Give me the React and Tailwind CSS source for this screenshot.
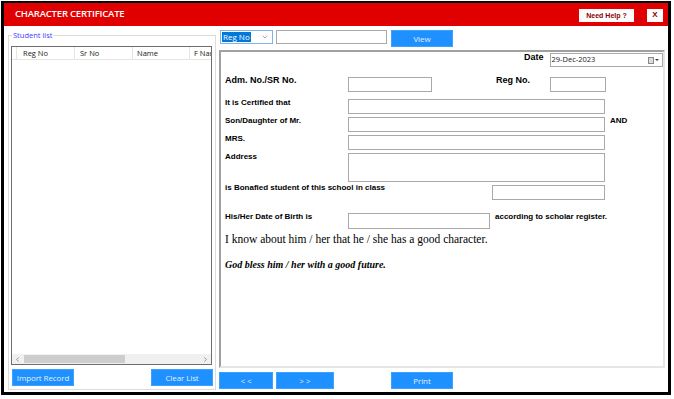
import { ChevronDown, ChevronLeft, ChevronRight } from "lucide-react";

const seg = { fontFamily: '"Open Sans", "Noto Sans", sans-serif' };
const serif = { fontFamily: '"Liberation Serif", "DejaVu Serif", serif' };

const Field = ({ w, h = "h-[15px]" }) => (
  <div className={`${w} ${h} border border-[#a9a9a9] bg-white`} />
);

const BlueBtn = ({ label, w }) => (
  <button
    className={`${w} h-[17px] bg-[#1e90ff] border border-[#3ea0ff] text-[#e3eefc] text-[8px] tracking-[-0.1px] leading-none whitespace-nowrap flex items-center justify-center`}
    style={seg}
  >
    {label}
  </button>
);

export default function App() {
  return (
    <div
      className="w-[674px] h-[399px] bg-white pl-px pt-px"
      style={{ fontFamily: '"Liberation Sans", Arial, sans-serif' }}
    >
      <div className="w-[670px] h-[394px] border-[3px] border-t-2 border-black flex flex-col bg-white">
        {/* title bar */}
        <div className="h-[23px] bg-[#e00000] flex items-center pl-[11px] pr-[5px]">
          <span className="text-white text-[9.5px] font-semibold tracking-[-0.2px]" style={seg}>
            CHARACTER CERTIFICATE
          </span>
          <div className="ml-auto flex items-center gap-[13px] mt-[1px]">
            <button className="w-[55px] h-[13px] bg-white text-[#8b0000] text-[7px] font-bold leading-none flex items-center justify-center">
              Need Help ?
            </button>
            <button className="w-[16px] h-[13px] bg-white text-[#8b0000] text-[8px] font-bold leading-none flex items-center justify-center">
              X
            </button>
          </div>
        </div>

        <div className="flex flex-1">
          {/* student list */}
          <fieldset className="ml-[4px] mt-[4px] mb-[2px] w-[208px] border border-[#dcdcdc] px-[2px] flex flex-col">
            <legend
              className="ml-[1px] px-[1px] text-[7.5px] leading-[10px] text-[#3c3cff]"
              style={seg}
            >
              Student list
            </legend>
            <div className="mt-[6px] w-[201px] h-[319px] border border-[#6e6e6e] flex flex-col bg-white overflow-hidden">
              <div
                className="h-[13px] flex text-[7.5px] leading-[12px] text-[#222] border-b border-[#e5e5e5] whitespace-nowrap"
                style={seg}
              >
                <div className="w-[5px] shrink-0 border-r border-[#e5e5e5]" />
                <div className="w-[58px] shrink-0 pl-[6px] border-r border-[#e5e5e5]">Reg No</div>
                <div className="w-[58px] shrink-0 pl-[5px] border-r border-[#e5e5e5]">Sr No</div>
                <div className="w-[57px] shrink-0 pl-[4px] border-r border-[#e5e5e5]">Name</div>
                <div className="pl-[4px] overflow-hidden">F Name</div>
              </div>
              <div className="flex-1" />
              <div className="h-[10px] bg-[#f0f0f0] flex items-center text-[#555]">
                <ChevronLeft size={7} strokeWidth={2} className="ml-[2px]" />
                <div className="ml-[3px] w-[101px] h-[8px] bg-[#cdcdcd]" />
                <ChevronRight size={7} strokeWidth={2} className="ml-auto mr-[2px]" />
              </div>
            </div>
            <div className="mt-[4px] flex justify-between pl-[1px]">
              <BlueBtn label="Import Record" w="w-[62px]" />
              <BlueBtn label="Clear List" w="w-[62px]" />
            </div>
          </fieldset>

          {/* right side */}
          <div className="ml-[3px] flex flex-col">
            <div className="mt-[4px] flex items-start">
              <div className="ml-[1px] w-[53px] h-[14px] border border-[#7eb4ea] bg-white flex items-center pl-[1px]">
                <span
                  className="bg-[#0078d7] text-white text-[8px] leading-[10px] px-[1px]"
                  style={seg}
                >
                  Reg No
                </span>
                <ChevronDown size={8} strokeWidth={1.5} className="ml-auto mr-[3px] text-[#555]" />
              </div>
              <div className="ml-[3px] w-[111px] h-[14px] border border-[#a9a9a9] bg-white" />
              <div className="ml-[4px]">
                <BlueBtn label="View" w="w-[62px]" />
              </div>
            </div>

            {/* certificate panel */}
            <div className="mt-[3px] w-[446px] h-[318px] border-2 border-t-[#a0a0a0] border-l-[#a0a0a0] border-r-[#e6e6e6] border-b-[#e6e6e6] flex flex-col pl-[4px] text-black">
              <div className="mt-[1px] flex items-start">
                <span className="ml-[299px] mt-[-1px] text-[9px] font-bold leading-[10px]">Date</span>
                <div className="ml-[6px] w-[114px] h-[14px] border border-[#a9a9a9] bg-white flex items-center pl-[1px]">
                  <span className="text-[7.5px] text-[#222]" style={seg}>29-Dec-2023</span>
                  <div className="ml-auto mr-[3px] flex items-center">
                    <div className="w-[6px] h-[7px] border border-[#888] bg-[#ddd]" />
                    <div className="ml-px w-0 h-0 border-l-[2px] border-r-[2px] border-t-[2px] border-l-transparent border-r-transparent border-t-[#444]" />
                  </div>
                </div>
              </div>

              <div className="mt-[10px] flex items-start">
                <span className="w-[123px] mt-[-2px] text-[9px] font-bold leading-[10px]">Adm. No./SR No.</span>
                <Field w="w-[84px]" />
                <span className="ml-[64px] mt-[-2px] w-[54px] text-[9px] font-bold leading-[10px]">Reg No.</span>
                <Field w="w-[56px]" />
              </div>

              <div className="mt-[7px] flex items-start">
                <span className="w-[123px] mt-[-1px] text-[8px] font-bold leading-[10px]">It is Certified that</span>
                <Field w="w-[257px]" />
              </div>

              <div className="mt-[3px] flex items-start">
                <span className="w-[123px] mt-[-1px] text-[8px] font-bold leading-[10px]">Son/Daughter of Mr.</span>
                <Field w="w-[257px]" />
                <span className="ml-[5px] mt-[-1px] text-[8px] font-bold leading-[10px]">AND</span>
              </div>

              <div className="mt-[3px] flex items-start">
                <span className="w-[123px] mt-[-1px] text-[8px] font-bold leading-[10px]">MRS.</span>
                <Field w="w-[257px]" />
              </div>

              <div className="mt-[3px] flex items-start">
                <span className="w-[123px] mt-[-1px] text-[8px] font-bold leading-[10px]">Address</span>
                <Field w="w-[257px]" h="h-[29px]" />
              </div>

              <div className="mt-[3px] flex items-start">
                <span className="w-[267px] mt-[-2px] text-[8px] font-bold leading-[10px]">
                  is Bonafied student of this school in class
                </span>
                <Field w="w-[113px]" />
              </div>

              <div className="mt-[13px] flex items-start">
                <span className="w-[123px] mt-[-1px] text-[8px] font-bold leading-[10px]">His/Her Date of Birth is</span>
                <Field w="w-[142px]" h="h-[16px]" />
                <span className="ml-[5px] mt-[-1px] text-[8px] font-bold leading-[10px]">
                  according to scholar register.
                </span>
              </div>

              <div className="mt-[2px] text-[11.5px] leading-[16px]" style={serif}>
                I know about him / her that he / she has a good character.
              </div>

              <div className="mt-[13px] text-[10px] font-bold italic leading-[10px]" style={serif}>
                God bless him / her with a good future.
              </div>
            </div>

            <div className="mt-[4px] flex">
              <BlueBtn label="< <" w="w-[54px]" />
              <div className="ml-[3px]">
                <BlueBtn label="> >" w="w-[58px]" />
              </div>
              <div className="ml-[57px]">
                <BlueBtn label="Print" w="w-[62px]" />
              </div>
            </div>
          </div>
        </div>
      </div>
    </div>
  );
}
